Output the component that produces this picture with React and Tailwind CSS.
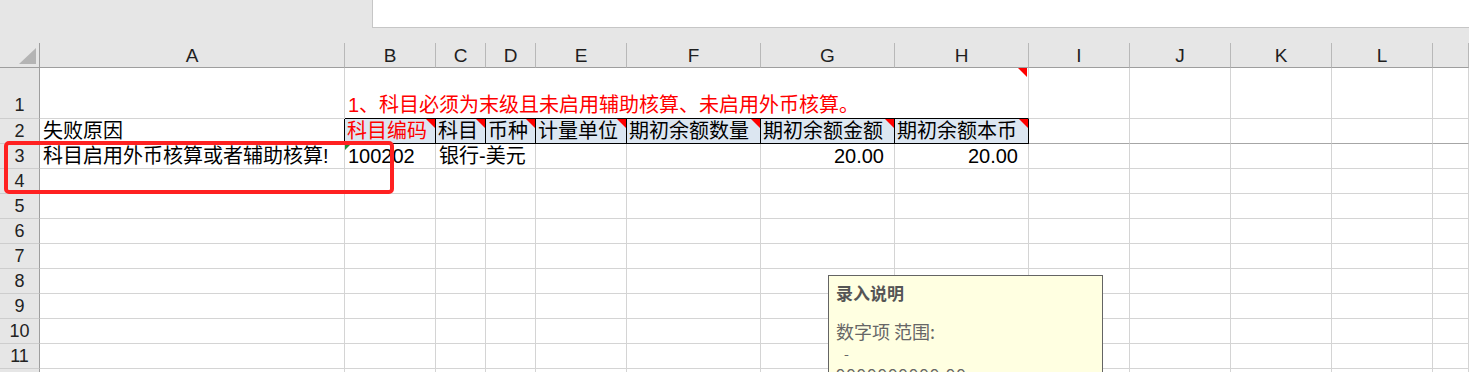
const letters = ['A', 'B', 'C', 'D', 'E', 'F', 'G', 'H', 'I', 'J', 'K', 'L', '']
const heads = ['科目编码', '科目', '币种', '计量单位', '期初余额数量', '期初余额金额', '期初余额本币']

function RedMark({ className = '' }) {
  return (
    <span className={`absolute top-0 right-0 w-[9px] h-[9px] bg-[#ff0000] [clip-path:polygon(0_0,100%_0,100%_100%)] ${className}`} />
  )
}

function Cell({ children, className = '' }) {
  return (
    <div className={`relative border-r border-b border-[#d4d4d4] leading-[25px] whitespace-nowrap ${className}`}>
      {children}
    </div>
  )
}

function RowHead({ n, className = '' }) {
  return (
    <div className={`bg-[#e6e6e6] border-r border-b border-r-[#9e9e9e] border-b-[#cdcdcd] text-center text-[18px] leading-[25px] text-[#222] ${className}`}>
      {n}
    </div>
  )
}

function EmptyCells({ from }) {
  return letters.slice(from).map((l, i) => <Cell key={i} />)
}

export default function App() {
  return (
    <div
      className="relative w-[1469px] h-[372px] overflow-hidden bg-white text-[20px] text-black"
      style={{ fontFamily: '"Liberation Sans", "Noto Sans CJK SC", sans-serif' }}
    >
      <div className="h-[43px] bg-[#e6e6e6] flex">
        <div className="w-[372px]" />
        <div className="flex-1 h-[28px] bg-white border-l border-b border-[#c6c6c6]" />
      </div>

      <div className="grid grid-cols-[40px_305px_91px_50px_50px_91px_134px_134px_134px_101px_101px_101px_101px_36px] grid-rows-[25px_51px_25px] auto-rows-[25px]">
        {/* column headers */}
        <div className="relative bg-[#e6e6e6] border-r border-b border-[#9e9e9e]">
          <span className="absolute right-[3px] bottom-[3px] w-[17px] h-[16px] bg-[#b4b4b4] [clip-path:polygon(100%_0,100%_100%,0_100%)]" />
        </div>
        {letters.map((l, i) => (
          <div
            key={i}
            className="bg-[#e6e6e6] border-b border-r border-b-[#9e9e9e] border-r-[#b8b8b8] text-center text-[19px] leading-[25px] text-[#1f1f1f]"
          >
            {l}
          </div>
        ))}

        {/* row 1 */}
        <RowHead n="1" className="flex items-end justify-center" />
        <Cell />
        <Cell className="col-span-7 border-b-black flex items-end pl-[3px] text-[#ff0000]">
          1、科目必须为末级且未启用辅助核算、未启用外币核算。
          <RedMark className="right-[1px]" />
        </Cell>
        <EmptyCells from={8} />

        {/* row 2 */}
        <RowHead n="2" className="border-b-[#a6a6a6]" />
        <Cell className="border-r-black border-b-[#a6a6a6] pl-[3px]">失败原因</Cell>
        {heads.map((h, i) => (
          <Cell key={i} className={`bg-[#dce6f1] border-r-black border-b-black pl-[2px] ${i === 0 ? 'text-[#ff0000]' : ''}`}>
            {h}
            <RedMark />
          </Cell>
        ))}
        {letters.slice(8).map((l, i) => (
          <Cell key={i} className="border-b-[#a6a6a6]" />
        ))}

        {/* row 3 */}
        <RowHead n="3" />
        <Cell className="pl-[3px]">科目启用外币核算或者辅助核算!</Cell>
        <Cell className="pl-[3px]">
          <span className="absolute top-0 left-0 w-[6px] h-[6px] bg-[#1e8c3a] [clip-path:polygon(0_0,100%_0,0_100%)]" />
          100202
        </Cell>
        <Cell className="col-span-2 pl-[3px]">银行-美元</Cell>
        <Cell />
        <Cell />
        <Cell className="text-right pr-[10px]">20.00</Cell>
        <Cell className="text-right pr-[10px]">20.00</Cell>
        <EmptyCells from={8} />

        {/* rows 4 - 12 */}
        {[4, 5, 6, 7, 8, 9, 10, 11, 12].map(n => (
          <div key={n} className="contents">
            <RowHead n={n} />
            <EmptyCells from={0} />
          </div>
        ))}
      </div>

      {/* annotation frame */}
      <div className="absolute left-[4px] top-[141px] w-[390px] h-[53px] border-4 border-[#ff2121] rounded-[5px]" />

      {/* comment popup */}
      <div
        className="absolute left-[828px] top-[275px] w-[275px] h-[130px] bg-[#ffffe1] border border-[#646464] pl-[7px] pt-[5px] text-[#666]"
        style={{ fontFamily: '"Noto Sans CJK SC", sans-serif' }}
      >
        <div className="text-[17px] leading-[24px] font-bold text-[#555]">录入说明</div>
        <div className="mt-[14px] text-[18px] leading-[24px]">数字项 范围:</div>
        <div className="text-[14px] leading-[20px] pl-[8px]">-</div>
        <div className="mt-[-1px] text-[17px] leading-[24px] tracking-[1px]">9999999999.99 - 9999999999.99</div>
      </div>
    </div>
  )
}
